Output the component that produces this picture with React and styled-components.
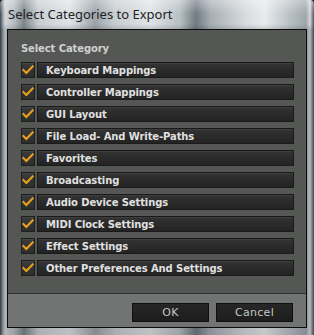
import React from "react";
import styled, { createGlobalStyle } from "styled-components";

const Global = createGlobalStyle`
  html, body { margin: 0; padding: 0; background: #1c2024; }
  body { width: 314px; height: 335px; overflow: hidden; }
`;

const Window = styled.div`
  width: 314px;
  height: 335px;
  box-sizing: border-box;
  display: flex;
  flex-direction: column;
  padding: 0 7px 7px 7px;
  background:
    linear-gradient(180deg, rgba(255,255,255,0.35) 0px, rgba(255,255,255,0) 14px, rgba(0,0,0,0) 24px, rgba(0,0,0,0.15) 30px),
    linear-gradient(90deg, #3b4650 0px, #9aa4ab 3px, #d0d5d8 5px, #b7bec2 14px, #7d868c 24px, #c9ced1 38px, #dfe3e5 70px, #9ca4aa 95px, #c8cdd0 115px, #e1e4e6 150px, #b8bfc3 180px, #6f7a82 196px, #a5adb3 210px, #d7dbde 245px, #e8ebec 265px, #b9c0c5 290px, #9ea7ad 306px, #d4d8db 310px, #4a545c 314px);
  border-radius: 4px 4px 0 0;
`;

const TitleBar = styled.div`
  height: 29px;
  flex: none;
  display: flex;
  align-items: center;
  padding-left: 1px;
  padding-bottom: 1px;
  box-sizing: border-box;
  font-family: "Noto Sans", "DejaVu Sans", sans-serif;
  font-size: 13px;
  color: #1e2226;
`;

const Panel = styled.div`
  flex: 1;
  display: flex;
  flex-direction: column;
  border: 1px solid #0b0b0b;
  background: #555755;
  min-height: 0;
`;

const Content = styled.div`
  flex: 1;
  padding: 11px 12px 0 13px;
  display: flex;
  flex-direction: column;
`;

const Heading = styled.div`
  font-family: "DejaVu Sans", sans-serif;
  font-weight: bold;
  font-size: 10px;
  color: #d0d0d0;
  height: 15px;
  line-height: 15px;
  margin-bottom: 6px;
  letter-spacing: -0.1px;
`;

const List = styled.div`
  display: flex;
  flex-direction: column;
  gap: 6px;
`;

const Row = styled.div`
  display: flex;
  gap: 2px;
  height: 16px;
`;

const Check = styled.div`
  width: 14px;
  height: 16px;
  box-sizing: border-box;
  border: 1px solid #1f1f1f;
  background: linear-gradient(180deg, #3a3b3a, #2c2d2c);
  box-shadow: inset 0 1px 0 rgba(255,255,255,0.06);
  display: flex;
  align-items: center;
  justify-content: center;
  flex: none;
`;

const Label = styled.div`
  flex: 1;
  box-sizing: border-box;
  border: 1px solid #1a1a1a;
  background: linear-gradient(180deg, #333433 0%, #2a2b2a 50%, #222322 100%);
  box-shadow: inset 0 1px 0 rgba(255,255,255,0.05);
  display: flex;
  align-items: center;
  padding-left: 8px;
  font-family: "DejaVu Sans", sans-serif;
  font-weight: bold;
  font-size: 10px;
  color: #e0e0e0;
  letter-spacing: -0.1px;
`;

const Footer = styled.div`
  flex: none;
  height: 34px;
  box-sizing: border-box;
  border-top: 1px solid #2e302f;
  background: #717472;
  display: flex;
  justify-content: flex-end;
  align-items: flex-start;
  gap: 7px;
  padding: 9px 13px 0 0;
`;

const Button = styled.div`
  width: 77px;
  height: 19px;
  box-sizing: border-box;
  border: 1px solid #101010;
  background: linear-gradient(180deg, #262726, #1c1d1c);
  display: flex;
  align-items: center;
  justify-content: center;
  font-family: "DejaVu Sans", sans-serif;
  font-size: 11px;
  color: #c4c6c5;
  letter-spacing: 0.3px;
`;

const CheckMark = () => (
  <svg width="12" height="10" viewBox="0 0 12 10">
    <polyline points="1.3,5 4.3,8 10.6,1.4" fill="none" stroke="#e8a21e" strokeWidth="2" strokeLinecap="square" />
  </svg>
);

const items = [
  "Keyboard Mappings",
  "Controller Mappings",
  "GUI Layout",
  "File Load- And Write-Paths",
  "Favorites",
  "Broadcasting",
  "Audio Device Settings",
  "MIDI Clock Settings",
  "Effect Settings",
  "Other Preferences And Settings",
];

export default function App() {
  return (
    <>
      <Global />
      <Window>
        <TitleBar>Select Categories to Export</TitleBar>
        <Panel>
          <Content>
            <Heading>Select Category</Heading>
            <List>
              {items.map((t) => (
                <Row key={t}>
                  <Check>
                    <CheckMark />
                  </Check>
                  <Label>{t}</Label>
                </Row>
              ))}
            </List>
          </Content>
          <Footer>
            <Button>OK</Button>
            <Button>Cancel</Button>
          </Footer>
        </Panel>
      </Window>
    </>
  );
}
